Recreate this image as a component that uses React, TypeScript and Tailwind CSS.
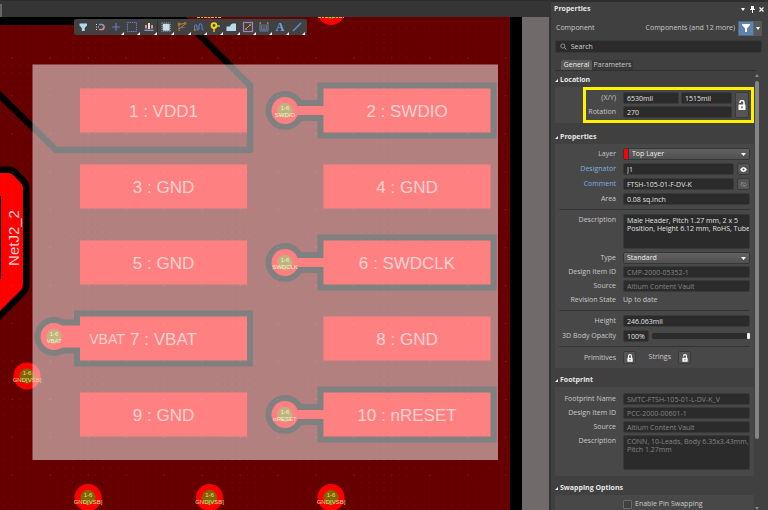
import React, { useId } from "react";
import type { ReactNode } from "react";

const FIELD =
  "block h-3 w-full min-w-0 rounded-[2px] border border-[#393939] bg-[#2b2b2b] px-[3px] text-[7px] leading-[10px] outline-none";
const SMALL_BUTTON =
  "flex shrink-0 items-center justify-center rounded-[2px] border border-[#3a3a3a] bg-[#555] text-white";

type FieldProps = { id?: string; value: string; muted?: boolean; label?: string };

function TextField({ id, value, muted, label }: FieldProps) {
  return (
    <input
      id={id}
      aria-label={label}
      defaultValue={value}
      readOnly={muted}
      className={`${FIELD} ${muted ? "text-[#858585]" : "text-[#e2e2e2]"}`}
    />
  );
}

function TextBox({ id, value, muted }: FieldProps) {
  return (
    <textarea
      id={id}
      defaultValue={value}
      readOnly={muted}
      className={`block h-[35px] w-full resize-none overflow-hidden rounded-[2px] border border-[#393939] bg-[#2b2b2b] py-[2px] pr-0 pl-[3px] text-[7px] leading-[8px] whitespace-pre outline-none ${
        muted ? "text-[#858585]" : "text-[#e2e2e2]"
      }`}
    />
  );
}

function Picker({ id, value, swatch }: { id: string; value: string; swatch?: boolean }) {
  return (
    <div className="relative flex h-3 overflow-hidden rounded-[2px] border border-[#363636] bg-linear-to-b from-[#626262] to-[#505050]">
      {swatch && <span className="w-[5px] shrink-0 border-r border-[#363636] bg-[#ff0000]" />}
      <select
        id={id}
        className="w-full appearance-none bg-transparent px-[3px] text-[7px] leading-[10px] text-[#eee] outline-none"
      >
        <option>{value}</option>
      </select>
      <svg className="pointer-events-none absolute top-1 right-[3px]" width="5" height="3" viewBox="0 0 5 3">
        <path d="M0 0h5L2.500 3z" fill="#fff" />
      </svg>
    </div>
  );
}

function Row({
  label,
  link,
  top,
  children,
}: {
  label: string;
  link?: boolean;
  top?: boolean;
  children: (id: string) => ReactNode;
}) {
  const id = useId();
  return (
    <div className={`flex gap-[7px] ${top ? "items-start" : "items-center"}`}>
      <label
        htmlFor={id}
        className={`w-[61px] shrink-0 text-right leading-3 whitespace-nowrap ${
          link ? "text-[#7fb0e0]" : "text-[#c8c8c8]"
        }`}
      >
        {label}
      </label>
      <div className="min-w-0 flex-1">{children(id)}</div>
    </div>
  );
}

function Heading({ children }: { children: ReactNode }) {
  return (
    <h2 className="flex h-3 items-center gap-[2px] font-bold text-[#e6e6e6]">
      <svg width="3" height="3" viewBox="0 0 3 3">
        <path d="M3 0v3H0z" fill="#eee" />
      </svg>
      {children}
    </h2>
  );
}

function Lock({ open, big }: { open?: boolean; big?: boolean }) {
  return (
    <svg width={big ? 8 : 6} height={big ? 10 : 8} viewBox="0 0 8 10" fill="none">
      <path d={open ? "M2 3V2.500a2 2 0 0 1 4 0V5" : "M2 5V2.500a2 2 0 0 1 4 0V5"} stroke="#fff" strokeWidth="1.500" />
      <rect x="0.500" y="4.500" width="7" height="5.500" rx="0.500" fill="#fff" />
      <path d="M4 6.200v2" stroke="#555" strokeWidth="1.300" />
    </svg>
  );
}

function Divider() {
  return <hr className="my-[1px] ml-1 border-0 border-t border-[#333]" />;
}

function PropertiesPanel() {
  return (
    <aside className="flex w-[219px] shrink-0 flex-col overflow-hidden border-l-2 border-[#343434] bg-[#404040] text-[7px] text-[#c8c8c8]">
      <header className="flex h-[17px] shrink-0 items-center border-t-2 border-[#2d2d2d] bg-[#404040] pr-1 pl-[3px]">
        <h1 className="flex-1 font-bold text-[#e6e6e6]">Properties</h1>
        <div className="flex items-center gap-[3px]">
          <button aria-label="Panel menu" className="flex w-[7px] justify-center">
            <svg width="4" height="3" viewBox="0 0 4 3"><path d="M0 0h4L2 3z" fill="#fff" /></svg>
          </button>
          <button aria-label="Pin panel" className="flex w-[6px] justify-center">
            <svg width="5" height="7" viewBox="0 0 5 7"><path d="M1 0h3v3h1v1H3v3H2V4H0V3h1z" fill="#fff" /></svg>
          </button>
          <button aria-label="Close panel" className="flex w-[6px] justify-center">
            <svg width="5" height="5" viewBox="0 0 5 5"><path d="M.5.5l4 4m0-4l-4 4" stroke="#fff" strokeWidth="1.200" /></svg>
          </button>
        </div>
      </header>

      <div className="flex h-[22px] shrink-0 items-center pr-[6px] pl-[5px]">
        <span className="flex-1">Component</span>
        <span className="pr-[3px]">Components (and 12 more)</span>
        <button aria-label="Filter objects" className="flex h-[15px] w-4 items-center justify-center border border-[#4c6a85] bg-[#5f84a8]">
          <svg width="8" height="8" viewBox="0 0 8 8"><path d="M0 0h8v1L5 4.500V8H3V4.500L0 1z" fill="#fff" /></svg>
        </button>
        <button aria-label="Filter choices" className="flex h-[15px] w-2 items-center justify-center bg-[#585858]">
          <svg width="4" height="3" viewBox="0 0 4 3"><path d="M0 0h4L2 3z" fill="#fff" /></svg>
        </button>
      </div>

      <div className="mt-[1px] mr-[6px] ml-1 flex h-[13px] shrink-0 items-center gap-1 rounded-[2px] border border-[#383838] bg-[#2b2b2b] px-1">
        <svg width="7" height="7" viewBox="0 0 7 7" fill="none" stroke="#aaa"><circle cx="3" cy="3" r="2.200" strokeWidth=".8" /><path d="M4.600 4.600L6.700 6.700" /></svg>
        <input aria-label="Search" placeholder="Search" className="w-full bg-transparent leading-[11px] outline-none placeholder:text-[#d0d0d0]" />
      </div>

      <div role="tablist" className="mt-[7px] mr-3 ml-1 flex h-[11px] shrink-0 border-b border-[#303030] pl-[6px]">
        <button role="tab" aria-selected="true" className="w-[31px] rounded-t-[2px] bg-[#585858] leading-[10px] text-[#eee]">General</button>
        <button role="tab" aria-selected="false" className="w-[41px] rounded-t-[2px] bg-[#383838] leading-[10px]">Parameters</button>
      </div>

      <div className="flex min-h-0 flex-1">
        <div className="min-w-0 flex-1 overflow-hidden pt-[3px] pl-1">
          <Heading>Location</Heading>
          <section className="mt-[1px] flex bg-[#484848]">
            <div className="ml-7 flex flex-1 gap-[3px] border-3 border-[#fff200] py-[2px] pr-[2px]">
              <div className="flex flex-1 flex-col gap-[2px]">
                <div className="flex items-center gap-[7px]">
                  <span className="w-[30px] text-right">(X/Y)</span>
                  <div className="flex flex-1 gap-[2px]">
                    <div className="w-14 shrink-0"><TextField value="6530mil" label="X" /></div>
                    <div className="min-w-0 flex-1"><TextField value="1515mil" label="Y" /></div>
                  </div>
                </div>
                <div className="flex items-center gap-[7px]">
                  <label htmlFor="rotation" className="w-[30px] text-right">Rotation</label>
                  <div className="flex-1"><TextField id="rotation" value="270" /></div>
                </div>
              </div>
              <button aria-label="Lock location" className={`${SMALL_BUTTON} w-[14px]`}><Lock open big /></button>
            </div>
          </section>

          <div className="mt-2"><Heading>Properties</Heading></div>
          <section className="mt-[1px] flex flex-col gap-[3px] bg-[#484848] pt-1 pr-1 pb-1">
            <Row label="Layer">{(id) => <Picker id={id} value="Top Layer" swatch />}</Row>
            <Row label="Designator" link>
              {(id) => (
                <div className="flex gap-[3px]">
                  <TextField id={id} value="J1" />
                  <button aria-label="Show designator" className={`${SMALL_BUTTON} h-3 w-[13px]`}>
                    <svg width="7" height="5" viewBox="0 0 7 5"><path d="M0 2.500Q3.500-2.500 7 2.500Q3.500 7.500 0 2.500z" fill="#fff" /><circle cx="3.500" cy="2.500" r="1" fill="#555" /></svg>
                  </button>
                </div>
              )}
            </Row>
            <Row label="Comment" link>
              {(id) => (
                <div className="flex gap-[3px]">
                  <TextField id={id} value="FTSH-105-01-F-DV-K" />
                  <button aria-label="Show comment" className={`${SMALL_BUTTON} h-3 w-[13px]`}>
                    <svg width="7" height="7" viewBox="0 0 7 7" fill="none" stroke="#8a8a8a"><path d="M.5 3.500Q3.500 0 6.500 3.500Q3.500 7 .5 3.500zM1 1l5 5.500" strokeWidth=".8" /></svg>
                  </button>
                </div>
              )}
            </Row>
            <Row label="Area">{(id) => <TextField id={id} value="0.08 sq.inch" />}</Row>
            <Divider />
            <Row label="Description" top>
              {(id) => <TextBox id={id} value={"Male Header, Pitch 1.27 mm, 2 x 5\nPosition, Height 6.12 mm, RoHS, Tube"} />}
            </Row>
            <div className="flex flex-col gap-[2px]">
              <Row label="Type">{(id) => <Picker id={id} value="Standard" />}</Row>
              <Row label="Design Item ID">{(id) => <TextField id={id} value="CMP-2000-05352-1" muted />}</Row>
              <Row label="Source">{(id) => <TextField id={id} value="Altium Content Vault" muted />}</Row>
              <Row label="Revision State">{(id) => <output id={id} className="block leading-3">Up to date</output>}</Row>
            </div>
            <Divider />
            <Row label="Height">{(id) => <TextField id={id} value="246.063mil" />}</Row>
            <Row label="3D Body Opacity">
              {(id) => (
                <div className="flex items-center gap-[3px]">
                  <div className="w-[26px] shrink-0"><TextField id={id} value="100%" /></div>
                  <input
                    type="range"
                    aria-label="3D body opacity"
                    defaultValue={100}
                    className="h-[6px] min-w-0 flex-1 appearance-none rounded-[2px] bg-[#2b2b2b] [&::-webkit-slider-thumb]:h-[6px] [&::-webkit-slider-thumb]:w-[3px] [&::-webkit-slider-thumb]:appearance-none [&::-webkit-slider-thumb]:rounded-[1px] [&::-webkit-slider-thumb]:bg-[#eee]"
                  />
                </div>
              )}
            </Row>
            <Divider />
            <Row label="Primitives">
              {(id) => (
                <div className="flex items-center">
                  <button id={id} aria-label="Primitives locked" className={`${SMALL_BUTTON} size-[13px]`}><Lock /></button>
                  <span className="w-[42px] pr-[7px] text-right">Strings</span>
                  <button aria-label="Strings unlocked" className={`${SMALL_BUTTON} size-[13px]`}><Lock open /></button>
                </div>
              )}
            </Row>
          </section>

          <div className="mt-[6px]"><Heading>Footprint</Heading></div>
          <section className="mt-[1px] flex flex-col gap-[2px] bg-[#484848] pt-[6px] pr-1 pb-[6px]">
            <Row label="Footprint Name">{(id) => <TextField id={id} value="SMTC-FTSH-105-01-L-DV-K_V" muted />}</Row>
            <Row label="Design Item ID">{(id) => <TextField id={id} value="PCC-2000-00601-1" muted />}</Row>
            <Row label="Source">{(id) => <TextField id={id} value="Altium Content Vault" muted />}</Row>
            <Row label="Description" top>
              {(id) => <TextBox id={id} value={"CONN, 10-Leads, Body 6.35x3.43mm,\nPitch 1.27mm"} muted />}
            </Row>
          </section>

          <div className="mt-[6px]"><Heading>Swapping Options</Heading></div>
          <section className="mt-[1px] bg-[#484848] py-1 pl-[68px]">
            <label className="flex items-center gap-[3px] leading-[10px]">
              <input type="checkbox" className="size-[9px] appearance-none rounded-[1px] border border-[#6a6a6a] bg-[#404040]" />
              Enable Pin Swapping
            </label>
          </section>
        </div>
        <div className="flex w-[14px] shrink-0 flex-col justify-between pt-[3px] pl-[1px]">
          <svg width="4" height="3" viewBox="0 0 4 3"><path d="M0 3h4L2 0z" fill="#888" /></svg>
          <div className="mt-1 w-1 flex-1"><div className="h-[84%] rounded-full bg-[#858585]" /></div>
          <svg width="4" height="3" viewBox="0 0 4 3"><path d="M0 0h4L2 3z" fill="#888" /></svg>
        </div>
      </div>
    </aside>
  );
}

const TOOLS: { name: string; menu: boolean; art: ReactNode }[] = [
  { name: "Filter", menu: false, art: <path d="M2.500 2.500h7.500v2L7.700 7v3H4.800V7L2.500 4.500z" fill="#b5d9ea" /> },
  {
    name: "Snap",
    menu: false,
    art: (
      <g fill="none">
        <path d="M5 3.500h2.500a2.500 2.500 0 0 1 2.500 2.500" stroke="#7d9ad6" strokeWidth="1.700" />
        <path d="M5 8.500h2.500A2.500 2.500 0 0 0 10 6" stroke="#e08585" strokeWidth="1.700" />
        <path d="M2 3.500h2M2 6h4M2 8.500h2" stroke="#ddd" strokeDasharray="1 1" />
      </g>
    ),
  },
  { name: "Place origin", menu: true, art: <path d="M6 2v8M2 6h8" stroke="#5b80bd" strokeWidth="1.200" /> },
  { name: "Select area", menu: true, art: <rect x="1.500" y="1.500" width="9" height="9" fill="none" stroke="#5c7fd0" strokeDasharray="1.500 .7" /> },
  {
    name: "Align",
    menu: true,
    art: (
      <g>
        <path d="M3 4v3.500M9 4v3.500" stroke="#e08a8a" strokeWidth="2" />
        <path d="M6 2v6" stroke="#d3e4ee" strokeWidth="2" />
        <path d="M1.500 9.300h9" stroke="#8ea8d0" strokeWidth="1.200" />
      </g>
    ),
  },
  {
    name: "Component",
    menu: true,
    art: (
      <g>
        <rect x="1.800" y="1.800" width="8.800" height="8.800" fill="none" stroke="#899" strokeDasharray="1 1" />
        <rect x="2.700" y="2.700" width="7" height="7" rx="1" fill="#c7dde7" />
      </g>
    ),
  },
  {
    name: "Route",
    menu: true,
    art: (
      <g fill="none" stroke="#b9842c">
        <path d="M3 10V3h3L9.500 2M3 8l5-4" />
        <circle cx="3" cy="3" r="1" />
        <circle cx="9" cy="2.500" r="1" />
        <path d="M5 7l4-1" stroke="#567bb5" />
      </g>
    ),
  },
  {
    name: "Tune length",
    menu: true,
    art: (
      <g fill="none">
        <path d="M1.500 9V6c0-3 2.500-3 2.500 0v1.500c0 2 2 2 2 0V5c0-3 3-3 3 0v2q0 2 1.500 2" stroke="#567bb5" strokeWidth="1.200" />
        <circle cx="1.800" cy="9" r=".7" stroke="#b9842c" />
      </g>
    ),
  },
  {
    name: "Via",
    menu: true,
    art: (
      <g>
        <path d="M5 5v6M5 5h6" stroke="#f3c614" strokeWidth="1.500" />
        <circle cx="5" cy="4.500" r="2.400" fill="#5a4a10" stroke="#f7d417" strokeWidth="1.900" />
        <path d="M9 5h2" stroke="#61b34c" strokeWidth="1.500" />
      </g>
    ),
  },
  { name: "Polygon", menu: true, art: <path d="M1.500 5.500H5Q5.500 3 7.500 2.500H11V10H1.500z" fill="#b7dcf0" /> },
  {
    name: "Keepout",
    menu: true,
    art: (
      <g fill="none">
        <rect x="1.500" y="1.500" width="9" height="9" stroke="#b27cb9" strokeWidth="1.200" />
        <path d="M4 8l4-4" stroke="#c39a40" />
        <circle cx="4" cy="8" r=".7" stroke="#7cb06a" />
        <circle cx="8.200" cy="4" r=".7" stroke="#c39a40" />
      </g>
    ),
  },
  {
    name: "Dimension",
    menu: true,
    art: (
      <g fill="none">
        <path d="M2 3v7h8V3" stroke="#6683ad" />
        <path d="M1.500 2h1.500M9 2h1.500" stroke="#c59139" strokeWidth="1.500" />
        <path d="M3.500 4h5v4.500h-5zM4.500 5L7.500 8M7.500 5L4.500 8" stroke="#747c88" strokeWidth=".8" />
      </g>
    ),
  },
  {
    name: "Text",
    menu: true,
    art: <text x="6" y="10" textAnchor="middle" fontSize="12" fontWeight="700" fill="#6ea4e6" className="font-['Liberation_Serif',serif]">A</text>,
  },
  { name: "Line", menu: true, art: <path d="M2 10L10 2" stroke="#5b8fd6" strokeWidth="1.400" /> },
];

function Toolbar() {
  return (
    <div
      role="toolbar"
      aria-label="Placement tools"
      className="absolute top-[2px] left-[74px] flex h-4 w-[233px] rounded-[2px] bg-[#414141] pr-[2px] pl-[1px]"
    >
      {TOOLS.map((tool, i) => (
        <button
          key={tool.name}
          aria-label={tool.name}
          className={`relative flex flex-1 items-center justify-center ${i === 5 ? "border-l border-[#303030]" : ""}`}
        >
          <svg width="12" height="12" viewBox="0 0 12 12">{tool.art}</svg>
          {tool.menu && (
            <svg className="absolute right-0 bottom-0" width="3" height="3" viewBox="0 0 3 3"><path d="M3 0v3H0z" fill="#fff" /></svg>
          )}
        </button>
      ))}
    </div>
  );
}

const PAD_WIDTH = 167;
const PAD_HEIGHT = 44;
const LEFT = 80;
const RIGHT = 323.5;

const PADS = [
  { x: LEFT, y: 88.5, name: "1 : VDD1" },
  { x: RIGHT, y: 88.5, name: "2 : SWDIO", via: "SWDIO" },
  { x: LEFT, y: 164.5, name: "3 : GND" },
  { x: RIGHT, y: 164.5, name: "4 : GND" },
  { x: LEFT, y: 240.5, name: "5 : GND" },
  { x: RIGHT, y: 240.5, name: "6 : SWDCLK", via: "SWDCLK" },
  { x: LEFT, y: 316.5, name: "7 : VBAT", via: "VBAT" },
  { x: RIGHT, y: 316.5, name: "8 : GND" },
  { x: LEFT, y: 392.5, name: "9 : GND" },
  { x: RIGHT, y: 392.5, name: "10 : nRESET", via: "nRESET" },
];

const TOP_EDGE = 17;

const GROUND_VIAS = [
  [209, 5],
  [331, 11.5],
  [27, 376],
  [88, 497.5],
  [209.5, 497.5],
  [331, 497.5],
];

function viaOf(pad: { x: number; y: number }) {
  const wide = pad.x === LEFT;
  return { cx: wide ? 54 : 285, cy: pad.y + (wide ? 20 : 22), half: wide ? 11 : 4.5 };
}

function ViaLabel({ x, y, net, fill }: { x: number; y: number; net: string; fill: string }) {
  return (
    <g textAnchor="middle" fill={fill} fontSize="6">
      <text x={x} y={y - 1}>1-6</text>
      <text x={x} y={y + 6}>{net}</text>
    </g>
  );
}

function Board() {
  const connected = PADS.filter((p) => p.via);
  return (
    <svg
      role="img"
      aria-label="Board layout of connector J1"
      className="block h-full w-full font-['Liberation_Sans',Arial,sans-serif]"
      viewBox="0 17 549 493"
      preserveAspectRatio="xMinYMin slice"
    >
      <defs>
        <pattern id="dots" x="4" y="4" width="7.590" height="7.590" patternUnits="userSpaceOnUse">
          <rect width="1" height="1" fill="#fff" opacity=".07" />
        </pattern>
        <pattern id="coarse" x="12" y="19.500" width="37.950" height="37.950" patternUnits="userSpaceOnUse">
          <rect width="1" height="1" fill="#fff" opacity=".15" />
        </pattern>
      </defs>
      <rect y="17" width="549" height="493" fill="#706b6a" />
      <rect y="17" width="522" height="493" fill="#000" />
      <path d="M183 17H510V510H0V25H183z" fill="#660000" />

      <path d="M-4 91.500L56 150H250V85.500L182 17.500" fill="none" stroke="#000" strokeWidth="6.500" strokeLinejoin="round" />

      <path d="M-5 173H8Q12 173 14 176L21 183Q23 185 23 189V284Q23 288 21 290L-5 316z" fill="#f00" stroke="#000" strokeWidth="13" strokeLinejoin="round" />
      <path d="M-5 173H8Q12 173 14 176L21 183Q23 185 23 189V284Q23 288 21 290L-5 316z" fill="#f00" />
      <rect y="196" width="1" height="83" fill="#000" />
      <text transform="translate(19 238) rotate(-90)" textAnchor="middle" fontSize="15" fill="#ffd4d4">NetJ2_2</text>

      <g fill="#000">
        {connected.map((p) => {
          const v = viaOf(p);
          return (
            <g key={p.name}>
              <circle cx={v.cx} cy={v.cy} r="19.500" />
              <rect x={v.cx} y={v.cy - v.half - 6} width={p.x - v.cx} height={v.half * 2 + 12} />
              <rect x={p.x - 6} y={p.y - 6} width={PAD_WIDTH + 12} height={PAD_HEIGHT + 12} />
            </g>
          );
        })}
      </g>
      <g fill="#f00">
        {connected.map((p) => {
          const v = viaOf(p);
          return (
            <g key={p.name}>
              <circle cx={v.cx} cy={v.cy} r="13.500" />
              <rect x={v.cx} y={v.cy - v.half} width={p.x - v.cx + 1} height={v.half * 2} />
              <circle cx={v.cx} cy={v.cy} r="7.500" fill="#806600" />
            </g>
          );
        })}
        {PADS.map((p) => (
          <rect key={p.name} x={p.x} y={p.y} width={PAD_WIDTH} height={PAD_HEIGHT} />
        ))}
        {GROUND_VIAS.map(([x, y]) => (
          <g key={`${x}-${y}`}>
            <circle cx={x} cy={y} r="13.500" />
            <circle cx={x} cy={y} r="7.500" fill="#806600" />
          </g>
        ))}
      </g>

      <rect x="32.500" y="64.500" width="465.500" height="395.500" fill="#fff" fillOpacity=".5" />
      <rect y="25" width="510" height="485" fill="url(#dots)" />
      <rect y="25" width="510" height="485" fill="url(#coarse)" />

      <path d="M197 17.500H222M318 17.500H344" stroke="#d8a850" strokeDasharray="3 1 2 1" />
      {GROUND_VIAS.filter(([, y]) => y > TOP_EDGE).map(([x, y]) => (
        <ViaLabel key={`${x}-${y}`} x={x} y={y} net="GND[VSB]" fill="#f3dc92" />
      ))}
      {connected.map((p) => {
        const v = viaOf(p);
        return <ViaLabel key={p.name} x={v.cx} y={v.cy} net={p.via ?? ""} fill="#fff0c8" />;
      })}
      <g textAnchor="middle" fontSize="17" fill="#ffd2d2">
        {PADS.map((p) => (
          <text key={p.name} x={p.x + PAD_WIDTH / 2} y={p.y + 28.5}>{p.name}</text>
        ))}
        <text x="107" y="344" fontSize="14">VBAT</text>
      </g>
    </svg>
  );
}

export default function App() {
  return (
    <div className="flex h-screen w-full overflow-hidden bg-[#343434] font-['Open_Sans','Noto_Sans',sans-serif]">
      <main className="flex min-w-0 flex-1 flex-col">
        <div className="flex h-[17px] shrink-0 items-end border-t border-[#2d2d2d] bg-[#353535]">
          <div className="h-[13px] w-[2px] bg-[#666]" />
        </div>
        <div className="relative min-h-0 flex-1">
          <Board />
          <Toolbar />
        </div>
      </main>
      <PropertiesPanel />
    </div>
  );
}
